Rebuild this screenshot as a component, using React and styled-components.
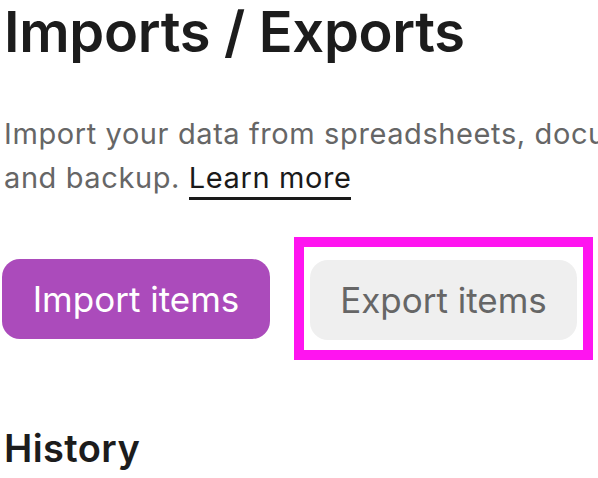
import React from "react";
import styled, { createGlobalStyle } from "styled-components";

const GlobalStyle = createGlobalStyle`
  body {
    margin: 0;
    background: #ffffff;
    font-family: Inter, "Noto Sans", sans-serif;
    overflow: hidden;
  }
`;

const Page = styled.div`
  width: 598px;
  height: 478px;
  padding: 0 0 0 4px;
  box-sizing: border-box;
  overflow: hidden;
  white-space: nowrap;
`;

const Title = styled.h1`
  margin: 0;
  font-size: 56px;
  line-height: 64px;
  font-weight: 600;
  color: #1c1c1c;
  letter-spacing: -0.3px;
`;

const Lead = styled.p`
  margin: 48px 0 0;
  font-size: 29px;
  line-height: 44px;
  letter-spacing: 0.6px;
  color: #666666;
`;

const Learn = styled.a`
  color: #1a1a1a;
  text-decoration: none;
  border-bottom: 3px solid #1a1a1a;
  padding-bottom: 2px;
`;

const Actions = styled.div`
  display: flex;
  align-items: center;
  gap: 24px;
  margin-top: 37px;
  margin-left: -2px;
`;

const Button = styled.button`
  height: 80px;
  width: ${(p) => p.$width}px;
  border: none;
  border-radius: 18px;
  font-family: Inter, "Noto Sans", sans-serif;
  font-size: 35px;
  background: ${(p) => (p.$primary ? "#ab4bbb" : "#efefef")};
  color: ${(p) => (p.$primary ? "#ffffff" : "#666666")};
  padding: 0;
`;

const Highlight = styled.div`
  display: flex;
  padding: 13px 6px 10px 6px;
  border: 10px solid #ff14f0;
`;

const Section = styled.h2`
  margin: 64px 0 0;
  font-size: 38px;
  line-height: 48px;
  font-weight: 600;
  letter-spacing: 0.4px;
  color: #1c1c1c;
`;

export default function App() {
  return (
    <>
      <GlobalStyle />
      <Page>
        <Title>Imports / Exports</Title>
        <Lead>
          Import your data from spreadsheets, documents
          <br />
          and backup. <Learn href="#">Learn more</Learn>
        </Lead>
        <Actions>
          <Button $primary $width={268}>Import items</Button>
          <Highlight>
            <Button $width={267}>Export items</Button>
          </Highlight>
        </Actions>
        <Section>History</Section>
      </Page>
    </>
  );
}
